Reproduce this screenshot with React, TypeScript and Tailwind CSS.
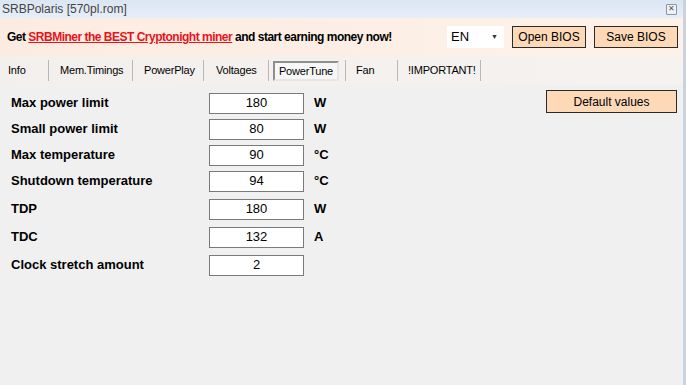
import { useState } from "react";

const rows = [
  { label: "Max power limit", value: "180", unit: "W" },
  { label: "Small power limit", value: "80", unit: "W" },
  { label: "Max temperature", value: "90", unit: "°C" },
  { label: "Shutdown temperature", value: "94", unit: "°C" },
  { label: "TDP", value: "180", unit: "W" },
  { label: "TDC", value: "132", unit: "A" },
  { label: "Clock stretch amount", value: "2", unit: "" },
];

// width of each tab segment and left inset of its text
const tabs = [
  { name: "Info", w: "w-[40px]", pl: "pl-0" },
  { name: "Mem.Timings", w: "w-[83px]", pl: "pl-[11px]" },
  { name: "PowerPlay", w: "w-[70px]", pl: "pl-[11px]" },
  { name: "Voltages", w: "w-[64px]", pl: "pl-[12px]" },
  { name: "PowerTune", w: "w-[76px]", pl: "pl-[4px]" },
  { name: "Fan", w: "w-[51px]", pl: "pl-[10px]" },
  { name: "!IMPORTANT!", w: "w-[82px]", pl: "pl-[10px]" },
];

export default function App() {
  const [active, setActive] = useState("PowerTune");

  return (
    <div className="w-[686px] h-[385px] overflow-hidden flex flex-col bg-[#f0f0f0] font-['Liberation_Sans',Arial,sans-serif] text-black border-r-[3px] border-[#c9d3de]">
      {/* title bar */}
      <div className="h-[18px] flex items-center justify-between pl-0.5 pr-1.5 bg-gradient-to-b from-[#dbe6f3] to-[#e6eef8]">
        <span className="text-[12px] text-[#444]">SRBPolaris [570pl.rom]</span>
        <span className="w-[11px] h-[11px] border border-[#8a96a4] rounded-[1px] bg-[#eef2f7] flex items-center justify-center text-[8px] leading-none text-[#555]">
          ✕
        </span>
      </div>

      {/* promo bar */}
      <div className="h-[38px] flex items-center pl-[7px] pr-[5px] bg-gradient-to-r from-[#fcebe0] to-[#fdf2ea]">
        <p className="text-[12px] font-bold tracking-[-0.5px] whitespace-nowrap">
          Get{" "}
          <a href="#" className="text-[#e8141b] underline">
            SRBMiner the BEST Cryptonight miner
          </a>{" "}
          and start earning money now!
        </p>
        <div className="ml-auto flex items-center gap-2">
          <div className="w-[57px] h-[22px] bg-white flex items-center justify-between pl-1 pr-1.5 text-[13px]">
            <span>EN</span>
            <span className="text-[7px] text-[#333]">▼</span>
          </div>
          <button className="w-[74px] h-[22px] bg-[#fdd9b8] border border-[#2a2a2a] text-[12px]">Open BIOS</button>
          <button className="w-[84px] h-[22px] bg-[#fdd9b8] border border-[#2a2a2a] text-[12px]">Save BIOS</button>
        </div>
      </div>

      {/* tabs */}
      <div className="h-[29px] flex items-center pl-[8px] bg-gradient-to-r from-[#f3efec] to-[#f5f2f0]">
        {tabs.map((t) => (
          <div key={t.name} className="flex items-center">
            <div className={`${t.w} ${t.pl} flex items-center`}>
              <button
                onClick={() => setActive(t.name)}
                className={`h-[20px] text-[11px] tracking-[-0.2px] whitespace-nowrap ${
                  active === t.name
                    ? "w-[66px] bg-[#f7f7f7] border-2 border-t-[#8f8f8f] border-l-[#8f8f8f] border-b-[#e6e6e6] border-r-[#e6e6e6]"
                    : ""
                }`}
              >
                {t.name}
              </button>
            </div>
            <span className="w-px h-[21px] bg-[#b8b8b8]" />
          </div>
        ))}
      </div>

      {/* content */}
      <div className="flex flex-1 pt-[5px]">
        <div className="flex flex-col pl-[11px]">
          {rows.map((r, i) => (
            <div key={r.label} className={`flex items-center h-[26px] ${i >= 4 ? "mt-[2px]" : ""}`}>
              <span className="w-[198px] text-[13px] font-bold">{r.label}</span>
              <div className="w-[95px] h-[21px] bg-white border border-[#7a7a7a] flex items-center justify-center text-[13px]">
                {r.value}
              </div>
              <span className="ml-[10px] text-[13px] font-bold">{r.unit}</span>
            </div>
          ))}
        </div>
        <div className="ml-auto pr-[6px] flex items-start">
          <button className="w-[131px] h-[23px] bg-[#fdd9b8] border border-[#2a2a2a] text-[12px]">Default values</button>
        </div>
      </div>
    </div>
  );
}
